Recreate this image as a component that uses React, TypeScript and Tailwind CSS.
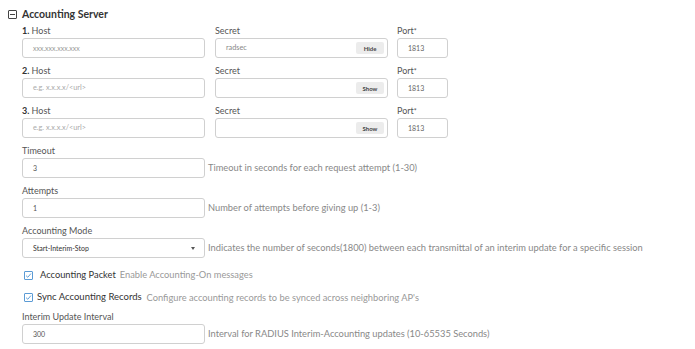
import React from "react";

const font = { fontFamily: "Lato, 'Open Sans', sans-serif" };

function Label({ num, text, star }: { num?: string; text: string; star?: boolean }) {
  return (
    <div className="h-[14px] text-[9px] leading-[14px] text-[#555]">
      {num && <span className="font-bold text-[#333]">{num} </span>}
      {text}
      {star && <span className="align-top text-[7px]">*</span>}
    </div>
  );
}

function Box({ children, w, className = "" }: { children?: React.ReactNode; w: string; className?: string }) {
  return (
    <div
      className={`flex h-[20px] items-center rounded-[3px] border border-[#d0d0d0] bg-white px-[10px] ${w} ${className}`}
    >
      {children}
    </div>
  );
}

function ServerRow({ n, host, secret, btn }: { n: string; host?: string; secret?: string; btn: string }) {
  return (
    <div className="mb-[6px] flex">
      <div className="w-[193px]">
        <Label num={n} text="Host" />
        <Box w="w-[183px]">
          {host ? (
            <span className="text-[7px] text-[#999]">{host}</span>
          ) : (
            <span className="text-[7.3px] text-[#aaa]">e.g. x.x.x.x/&lt;url&gt;</span>
          )}
        </Box>
      </div>
      <div className="w-[182px]">
        <Label text="Secret" />
        <div className="flex h-[20px] w-[173px] items-center justify-between rounded-[3px] border border-[#d0d0d0] bg-white pl-[10px] pr-[3px]">
          <span className="text-[7.3px] text-[#888]">{secret ?? ""}</span>
          <span className="flex h-[12px] w-[28px] items-center justify-center rounded-[2px] bg-[#ececec] text-[6px] font-bold text-[#444]">
            {btn}
          </span>
        </div>
      </div>
      <div>
        <Label text="Port" star />
        <Box w="w-[51px]">
          <span className="text-[7px] text-[#666]">1813</span>
        </Box>
      </div>
    </div>
  );
}

function FieldRow({ label, value, help, select }: { label: string; value: string; help: string; select?: boolean }) {
  return (
    <div className="mb-[6px]">
      <Label text={label} />
      <div className="flex items-center">
        {select ? (
          <div className="flex h-[20px] w-[183px] items-center justify-between rounded-[3px] border border-[#d0d0d0] bg-white pl-[10px] pr-[9px]">
            <span className="text-[7px] text-[#333]">{value}</span>
            <span className="h-0 w-0 border-l-[2.5px] border-r-[2.5px] border-t-[3px] border-l-transparent border-r-transparent border-t-[#555]" />
          </div>
        ) : (
          <Box w="w-[183px]">
            <span className="text-[7px] text-[#555]">{value}</span>
          </Box>
        )}
        <span className="ml-[3px] text-[9.3px] text-[#888]">{help}</span>
      </div>
    </div>
  );
}

function Check() {
  return (
    <span className="flex h-[9px] w-[9px] items-center justify-center rounded-[1px] border border-[#5b9bd5] bg-white">
      <svg width="7" height="7" viewBox="0 0 8 8">
        <path d="M1.2 4.2 L3.2 6 L6.8 1.8" fill="none" stroke="#5b9bd5" strokeWidth="1.1" />
      </svg>
    </span>
  );
}

export default function App() {
  return (
    <div className="h-[349px] w-[695px] bg-white" style={font}>
      <div className="flex h-[24px] items-center pl-[8px] pt-[5px]">
        <span className="mr-[5px] flex h-[9px] w-[9px] items-center justify-center rounded-[1px] border border-[#444]">
          <span className="h-[1px] w-[5px] bg-[#444]" />
        </span>
        <span className="text-[10.5px] font-bold text-[#333]">Accounting Server</span>
      </div>
      <div className="pl-[22px]">
        <ServerRow n="1." host="xxx.xxx.xxx.xxx" secret="radsec" btn="Hide" />
        <ServerRow n="2." btn="Show" />
        <ServerRow n="3." btn="Show" />
        <FieldRow label="Timeout" value="3" help="Timeout in seconds for each request attempt (1-30)" />
        <FieldRow label="Attempts" value="1" help="Number of attempts before giving up (1-3)" />
        <FieldRow
          label="Accounting Mode"
          value="Start-Interim-Stop"
          select
          help="Indicates the number of seconds(1800) between each transmittal of an interim update for a specific session"
        />
        <div className="flex h-[22px] items-center pl-[2px]">
          <Check />
          <span className="ml-[7px] text-[9.3px] text-[#333]">Accounting Packet</span>
          <span className="ml-[4px] text-[9.3px] text-[#999]">Enable Accounting-On messages</span>
        </div>
        <div className="flex h-[23px] items-center pl-[2px]">
          <Check />
          <span className="ml-[4px] text-[9.5px] text-[#333]">Sync Accounting Records</span>
          <span className="ml-[5px] text-[9.3px] text-[#999]">Configure accounting records to be synced across neighboring AP's</span>
        </div>
        <div className="mt-[1px]">
          <FieldRow label="Interim Update Interval" value="300" help="Interval for RADIUS Interim-Accounting updates (10-65535 Seconds)" />
        </div>
      </div>
    </div>
  );
}
